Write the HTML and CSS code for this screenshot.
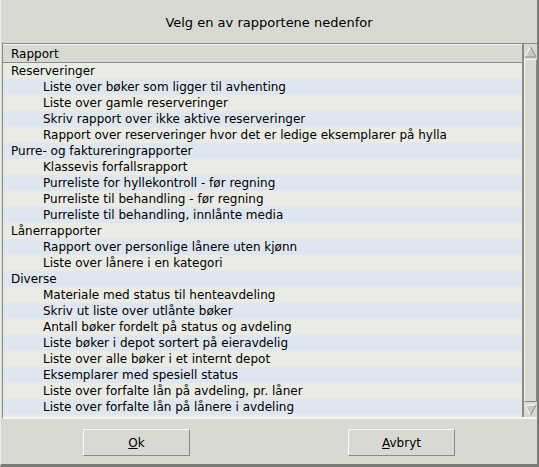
FILE: index.html
```html
<!DOCTYPE html>
<html>
<head>
<meta charset="utf-8">
<link rel="stylesheet" href="styles.css">
</head>
<body>
<div class="window">
  <div class="title">Velg en av rapportene nedenfor</div>
  <div class="listbox">
    <div class="list">
      <div class="header">Rapport</div>
      <div class="rows">
        <div class="row cat">Reserveringer</div>
        <div class="row item">Liste over bøker som ligger til avhenting</div>
        <div class="row item">Liste over gamle reserveringer</div>
        <div class="row item">Skriv rapport over ikke aktive reserveringer</div>
        <div class="row item">Rapport over reserveringer hvor det er ledige eksemplarer på hylla</div>
        <div class="row cat">Purre- og faktureringrapporter</div>
        <div class="row item">Klassevis forfallsrapport</div>
        <div class="row item">Purreliste for hyllekontroll - før regning</div>
        <div class="row item">Purreliste til behandling - før regning</div>
        <div class="row item">Purreliste til behandling, innlånte media</div>
        <div class="row cat">Lånerrapporter</div>
        <div class="row item">Rapport over personlige lånere uten kjønn</div>
        <div class="row item">Liste over lånere i en kategori</div>
        <div class="row cat">Diverse</div>
        <div class="row item">Materiale med status til henteavdeling</div>
        <div class="row item">Skriv ut liste over utlånte bøker</div>
        <div class="row item">Antall bøker fordelt på status og avdeling</div>
        <div class="row item">Liste bøker i depot sortert på eieravdelig</div>
        <div class="row item">Liste over alle bøker i et internt depot</div>
        <div class="row item">Eksemplarer med spesiell status</div>
        <div class="row item">Liste over forfalte lån på avdeling, pr. låner</div>
        <div class="row item">Liste over forfalte lån på lånere i avdeling</div>
      </div>
    </div>
    <div class="scrollbar">
      <div class="arrow">
        <svg width="13" height="13" viewBox="0 0 13 13"><polygon points="6.5,1.5 12,12 1,12" fill="#c8c8c4" stroke="none"/><polyline points="1,12 6.5,1.5" stroke="#ffffff" fill="none"/><polyline points="6.5,1.5 12,12 1,12" stroke="#8a8a86" fill="none"/></svg>
      </div>
      <div class="track"><div class="thumb"></div></div>
      <div class="arrow">
        <svg width="13" height="13" viewBox="0 0 13 13"><polygon points="1,1 12,1 6.5,11.5" fill="#c8c8c4" stroke="none"/><polyline points="6.5,11.5 1,1 12,1" stroke="#ffffff" fill="none"/><polyline points="12,1 6.5,11.5" stroke="#8a8a86" fill="none"/></svg>
      </div>
    </div>
  </div>
  <div class="buttons">
    <button class="btn"><u>O</u>k</button>
    <button class="btn"><u>A</u>vbryt</button>
  </div>
</div>
</body>
</html>
```
FILE: styles.css
```css
html, body {
  margin: 0;
  padding: 0;
}
body {
  width: 539px;
  height: 467px;
  overflow: hidden;
  background: #7b7b78;
}
.window {
  box-sizing: border-box;
  width: 539px;
  height: 467px;
  background: #d9d9d4;
  border-right: 2px solid #7b7b78;
  border-bottom: 3px solid #7b7b78;
  border-left: 1px solid #ececea;
  font-family: "DejaVu Sans", sans-serif;
  font-size: 12px;
  color: #000;
  display: flex;
  flex-direction: column;
}
.title {
  height: 43px;
  display: flex;
  align-items: center;
  justify-content: center;
  font-size: 13px;
  padding-top: 2px;
  box-sizing: border-box;
}
.listbox {
  margin-left: 1px;
  height: 373px;
  display: flex;
  border-top: 1px solid #8a8a86;
  border-left: 1px solid #8a8a86;
  border-bottom: 2px solid #f4f4f2;
}
.list {
  flex: 1;
  display: flex;
  flex-direction: column;
  background: #eaebe6;
  border-right: 2px solid #8a8a86;
}
.header {
  height: 17px;
  line-height: 18px;
  padding-left: 8px;
  background: #d9d9d4;
  border-bottom: 1px solid #8a8a86;
  border-top: 1px solid #f4f4f2;
  box-sizing: content-box;
}
.rows {
  flex: 1;
}
.row {
  height: 16px;
  line-height: 16px;
  white-space: nowrap;
}
.row:nth-child(even) {
  background: #dfe6ef;
}
.cat {
  padding-left: 8px;
}
.item {
  padding-left: 40px;
}
.scrollbar {
  width: 13px;
  display: flex;
  flex-direction: column;
  background: #d9d9d4;
}
.arrow {
  height: 14px;
  display: flex;
  align-items: center;
  justify-content: center;
}
.track {
  flex: 1;
  display: flex;
  padding: 1px 0;
}
.thumb {
  flex: 1;
  border-top: 1px solid #f4f4f2;
  border-left: 1px solid #f4f4f2;
  border-right: 1px solid #8a8a86;
  border-bottom: 1px solid #8a8a86;
  background: #d9d9d4;
}
.buttons {
  flex: 1;
  display: flex;
  align-items: center;
  justify-content: space-between;
  padding: 0 82px 0 82px;
}
.btn {
  width: 107px;
  height: 27px;
  background: #d9d9d4;
  border-top: 1px solid #f8f8f6;
  border-left: 1px solid #f8f8f6;
  border-right: 1px solid #8a8a86;
  border-bottom: 1px solid #8a8a86;
  font-family: "DejaVu Sans", sans-serif;
  font-size: 12px;
  color: #000;
  padding: 0;
  margin-top: 2px;
}
```
